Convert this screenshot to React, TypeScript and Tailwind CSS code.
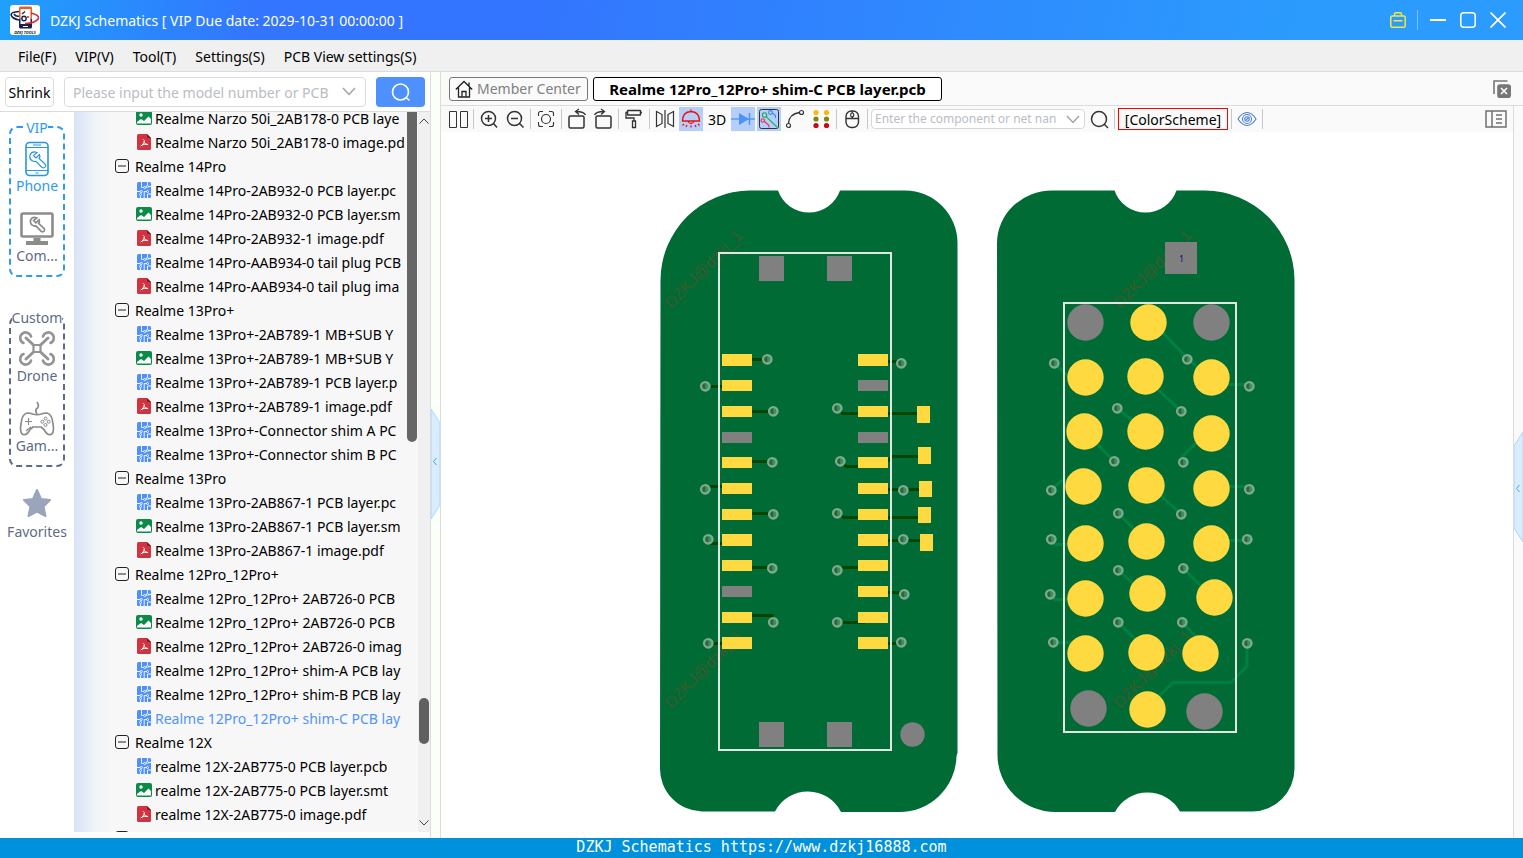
import type { ReactNode } from "react";

type FileKind = "pcb" | "smt" | "pdf";
type Row = { kind: FileKind | "group"; label: string; active?: boolean };

const rows: Row[] = [
  { kind: "smt", label: "Realme Narzo 50i_2AB178-0 PCB laye" },
  { kind: "pdf", label: "Realme Narzo 50i_2AB178-0 image.pd" },
  { kind: "group", label: "Realme 14Pro" },
  { kind: "pcb", label: "Realme 14Pro-2AB932-0 PCB layer.pc" },
  { kind: "smt", label: "Realme 14Pro-2AB932-0 PCB layer.sm" },
  { kind: "pdf", label: "Realme 14Pro-2AB932-1 image.pdf" },
  { kind: "pcb", label: "Realme 14Pro-AAB934-0 tail plug PCB" },
  { kind: "pdf", label: "Realme 14Pro-AAB934-0 tail plug ima" },
  { kind: "group", label: "Realme 13Pro+" },
  { kind: "pcb", label: "Realme 13Pro+-2AB789-1 MB+SUB Y" },
  { kind: "smt", label: "Realme 13Pro+-2AB789-1 MB+SUB Y" },
  { kind: "pcb", label: "Realme 13Pro+-2AB789-1 PCB layer.p" },
  { kind: "pdf", label: "Realme 13Pro+-2AB789-1 image.pdf" },
  { kind: "pcb", label: "Realme 13Pro+-Connector shim A PC" },
  { kind: "pcb", label: "Realme 13Pro+-Connector shim B PC" },
  { kind: "group", label: "Realme 13Pro" },
  { kind: "pcb", label: "Realme 13Pro-2AB867-1 PCB layer.pc" },
  { kind: "smt", label: "Realme 13Pro-2AB867-1 PCB layer.sm" },
  { kind: "pdf", label: "Realme 13Pro-2AB867-1 image.pdf" },
  { kind: "group", label: "Realme 12Pro_12Pro+" },
  { kind: "pcb", label: "Realme 12Pro_12Pro+ 2AB726-0 PCB" },
  { kind: "smt", label: "Realme 12Pro_12Pro+ 2AB726-0 PCB" },
  { kind: "pdf", label: "Realme 12Pro_12Pro+ 2AB726-0 imag" },
  { kind: "pcb", label: "Realme 12Pro_12Pro+ shim-A PCB lay" },
  { kind: "pcb", label: "Realme 12Pro_12Pro+ shim-B PCB lay" },
  { kind: "pcb", label: "Realme 12Pro_12Pro+ shim-C PCB lay", active: true },
  { kind: "group", label: "Realme 12X" },
  { kind: "pcb", label: "realme 12X-2AB775-0 PCB layer.pcb" },
  { kind: "smt", label: "realme 12X-2AB775-0 PCB layer.smt" },
  { kind: "pdf", label: "realme 12X-2AB775-0 image.pdf" },
  { kind: "group", label: "" },
];

function FileIcon({ kind }: { kind: FileKind }) {
  if (kind === "smt")
    return (
      <svg width="16" height="16" viewBox="0 0 16 16" className="shrink-0">
        <rect y="1" width="16" height="14" rx="2" fill="#0b8a4a" />
        <circle cx="5" cy="5" r="1.7" fill="#fff" />
        <path d="M1 12 L5 9 L8 11 L12.500 6.500 L15 9 V13.500 H1Z" fill="#fff" />
      </svg>
    );
  if (kind === "pdf")
    return (
      <svg width="16" height="16" viewBox="0 0 16 16" className="shrink-0">
        <path d="M2.500 0 H11 L15 4 V14.500 Q15 16 13.500 16 H2.500 Q1 16 1 14.500 V1.500 Q1 0 2.500 0Z" fill="#cf3440" />
        <path d="M11 0 L15 4 H11Z" fill="#8d1620" />
        <path d="M7.600 5.500 Q9 6 8 8.500 Q6.500 11.500 5 12 M8 8.500 Q9.500 10.500 11.500 10.600 M6 11 Q8 10 11 10.300" fill="none" stroke="#fff" strokeWidth="1" strokeLinecap="round" />
      </svg>
    );
  return (
    <svg width="16" height="16" viewBox="0 0 16 16" className="shrink-0">
      <rect x="1" width="14" height="16" rx="1.500" fill="#4d90fe" />
      <g fill="none" stroke="#fff" strokeWidth="0.900">
        <path d="M5.500 0 V5.500 H7.600 M1 9.500 H4 M8.200 16 V9.500 H10.500 M12.600 4.500 H15 M11.500 3.500 V0 M11.500 16 V12 H15 M4.500 16 V13.500" />
        <circle cx="8.700" cy="5.500" r="1.100" />
        <circle cx="5.200" cy="9.500" r="1.100" />
        <circle cx="11.500" cy="4.500" r="1.100" />
        <circle cx="11.500" cy="9.500" r="1" />
        <circle cx="4.500" cy="12.500" r="1" />
      </g>
    </svg>
  );
}

function Tree() {
  return (
    <ul className="-mt-1.5 min-w-0 flex-1 overflow-hidden pl-10">
      {rows.map((row, i) => (
        <li key={i}>
          {row.kind === "group" ? (
            <button aria-label="Toggle group" className="flex h-6 w-full items-center gap-1.5 whitespace-nowrap pl-px text-left">
              <svg width="14" height="14" viewBox="0 0 14 14" fill="none" stroke="#222" className="shrink-0">
                <rect x="0.500" y="0.500" width="13" height="13" rx="2.500" />
                <path d="M3 7 H11" />
              </svg>
              <span className="pt-0.5">{row.label}</span>
            </button>
          ) : (
            <button
              className={`flex h-6 w-full items-center gap-[3px] whitespace-nowrap pl-[22px] text-left ${row.active ? "text-[#5294fa]" : ""}`}
            >
              <FileIcon kind={row.kind} />
              <span className="min-w-0 pt-0.5">{row.label}</span>
            </button>
          )}
        </li>
      ))}
    </ul>
  );
}

const wrench = (
  <path d="M9.500 2.500 L6 6 L3.500 3.500 L7 0.500 Q2 -1.500 0 3 Q-1 8 4 9.500 L6 9.300 L12 15.500 Q14 16.500 15.200 15 Q16.200 13.500 15 12 L9 6.500 Q10.500 4.500 9.500 2.500Z" />
);

function PhoneIcon() {
  return (
    <svg width="36" height="36" viewBox="0 0 36 36" fill="none" stroke="#2a95e0">
      <rect x="7" y="1.500" width="22" height="33" rx="3.500" strokeWidth="1.600" />
      <path d="M7 6.500 H29 M7 29.500 H29" strokeWidth="1.200" />
      <path d="M14 4 H22 M16.500 32 H19.500" strokeWidth="1" />
      <g transform="translate(11 11)" strokeWidth="1.200">{wrench}</g>
    </svg>
  );
}

function ComputerIcon() {
  return (
    <svg width="36" height="36" viewBox="0 0 36 36" fill="none" stroke="#8c8c8c">
      <rect x="2.500" y="2.500" width="31" height="23" rx="1.500" strokeWidth="2.600" />
      <path d="M14.500 27 H21.500 V30 H29 V34 H7 V30 H14.500Z" fill="#8c8c8c" stroke="none" />
      <g transform="translate(11.500 6.500) scale(.9)" strokeWidth="1.900">{wrench}</g>
    </svg>
  );
}

function DroneIcon() {
  return (
    <svg width="36" height="36" viewBox="0 0 36 36" fill="none" stroke="#949494" strokeWidth="2.600" strokeLinecap="round">
      <path d="M14.500 14 H21.500 V21 H14.500Z" strokeWidth="2.200" />
      <path d="M7 7 L14.500 14 M29 7 L21.500 14 M7 28 L14.500 21 M29 28 L21.500 21" strokeWidth="3" />
      <path d="M4.500 12 A5.500 5.500 0 1 1 12 5.500 M31.500 12 A5.500 5.500 0 1 0 24 5.500 M4.500 23 A5.500 5.500 0 1 0 12 29.500 M31.500 23 A5.500 5.500 0 1 1 24 29.500" />
    </svg>
  );
}

function GamepadIcon() {
  return (
    <svg width="36" height="36" viewBox="0 0 36 36" fill="none" stroke="#8c8c8c" strokeWidth="1.700" strokeLinejoin="round">
      <path d="M8 12 Q12 12 13.500 13 Q18 14.500 22.500 13 Q24 12 28 12 Q33 13 34 23 Q35.500 32 32 33.500 Q28 34.500 25 28.500 L22 26 H14 L11 28.500 Q8 34.500 4 33.500 Q0.500 32 2 23 Q3 13 8 12Z" />
      <path d="M18 13 Q15.500 9 18.500 7 Q20.500 5 18 1" />
      <path d="M6 20.500 H13 M9.500 17 V24 M7 30 Q10 27 12 26" strokeWidth="1.200" />
      <g strokeWidth="1">
        <circle cx="26.500" cy="17.500" r="1.500" />
        <circle cx="26.500" cy="24" r="1.500" />
        <circle cx="23.300" cy="20.700" r="1.500" />
        <circle cx="29.700" cy="20.700" r="1.500" />
      </g>
    </svg>
  );
}

function StarIcon() {
  return (
    <svg width="36" height="36" viewBox="0 0 36 36" fill="#9aa5bb" stroke="#9aa5bb" strokeWidth="2" strokeLinejoin="round">
      <path d="M18 3 L22 12 L31 13 L24.500 19.500 L26.500 29 L18 24.500 L9.500 29 L11.500 19.500 L5 13 L14 12Z" />
    </svg>
  );
}

function NavItem({ icon, label }: { icon: ReactNode; label: string }) {
  return (
    <button className="flex h-14 w-full flex-col items-center">
      {icon}
      <span className="h-5 whitespace-nowrap leading-[18px]">{label}</span>
    </button>
  );
}

function SideNav() {
  return (
    <nav className="flex w-[74px] shrink-0 flex-col items-center bg-white pt-[5px] text-[#5d6b85]">
      <fieldset className="h-40 w-14 rounded-lg border-2 border-dashed border-[#2f9af5] text-[#2f9af5]">
        <legend className="mx-auto h-5 leading-[22px]">VIP</legend>
        <div className="flex flex-col gap-3.5 pt-1">
          <NavItem icon={<PhoneIcon />} label="Phone" />
          <div className="text-[#5d6b85]">
            <NavItem icon={<ComputerIcon />} label="Com..." />
          </div>
        </div>
      </fieldset>
      <fieldset className="mt-[30px] h-40 w-14 rounded-lg border-2 border-dashed border-[#5d6b85]">
        <legend className="mx-auto h-5 leading-[22px]">Custom</legend>
        <div className="flex flex-col gap-3.5 pt-1">
          <NavItem icon={<DroneIcon />} label="Drone" />
          <NavItem icon={<GamepadIcon />} label="Gam..." />
        </div>
      </fieldset>
      <div className="mt-5">
        <NavItem icon={<StarIcon />} label="Favorites" />
      </div>
    </nav>
  );
}

function Logo() {
  return (
    <svg width="30" height="30" viewBox="0 0 30 30" className="shrink-0">
      <rect width="30" height="30" rx="3" fill="#fff" />
      <rect x="9" y="1.500" width="13" height="12" rx="1.500" fill="#f15a24" />
      <rect x="9" y="13" width="13" height="10.500" rx="1.500" fill="#14224d" />
      <rect x="10.500" y="4" width="10" height="15" fill="#fff" />
      <path d="M9 6.500 Q0.500 7 1.200 10 Q2 13.500 9 15 M4 9 Q6 12 9 11" fill="none" stroke="#14224d" strokeWidth="1.600" />
      <path d="M21 8 Q29.500 10 28.500 13.500 Q25 18.500 15 18.500" fill="none" stroke="#e0242a" strokeWidth="1.600" />
      <circle cx="14" cy="13.500" r="2.200" fill="none" stroke="#14224d" strokeWidth="1.400" />
      <circle cx="18" cy="12" r="1" fill="#e0242a" />
      <path d="M12 9 L15 6.500" stroke="#14224d" strokeWidth="1.300" />
      <path d="M13 21.500 H18" stroke="#fff" strokeWidth="1" />
      <text x="15" y="28.500" textAnchor="middle" fontSize="4" fontWeight="700" fontStyle="italic" fill="#14224d">DZKJ TOOLS</text>
    </svg>
  );
}

function Chevron() {
  return (
    <svg width="14" height="9" viewBox="0 0 14 9" fill="none" stroke="#a0a4ab" strokeWidth="1.500">
      <path d="M1 1 L7 7.500 L13 1" />
    </svg>
  );
}

function Sep() {
  return <span className="mx-px h-5 w-px bg-[#c8c8c8]" />;
}

function Tool({ label, on, children }: { label: string; on?: boolean; children: ReactNode }) {
  return (
    <button aria-label={label} className={`flex h-6 w-6 items-center justify-center ${on ? "bg-[#b5cffb]" : ""}`}>
      {children}
    </button>
  );
}

function Glyph({ children }: { children: ReactNode }) {
  return (
    <svg width="24" height="24" viewBox="0 0 24 24" fill="none" stroke="#333" strokeWidth="1.500" className="shrink-0">
      {children}
    </svg>
  );
}

function Toolbar() {
  return (
    <div className="flex h-[26px] items-center gap-0.5 bg-[#fafafa] pl-[5px]">
      <Tool label="Split view">
        <Glyph><path d="M3.500 4.500 H10.500 V20.500 H3.500Z M14.500 4.500 H21.500 V20.500 H14.500Z" strokeWidth="1" /></Glyph>
      </Tool>
      <Sep />
      <Tool label="Zoom in">
        <Glyph><circle cx="11.500" cy="11.500" r="7" /><path d="M16.500 16.500 L20 20.500 M8 11.500 H15 M11.500 8 V15" /></Glyph>
      </Tool>
      <Tool label="Zoom out">
        <Glyph><circle cx="11.500" cy="11.500" r="7" /><path d="M16.500 16.500 L20.500 20.500 M8 11.500 H15" /></Glyph>
      </Tool>
      <Sep />
      <Tool label="Fit">
        <Glyph><circle cx="12" cy="12" r="4.500" strokeWidth="1.200" /><path d="M4.500 9 V6.500 Q4.500 4.500 6.500 4.500 H9 M15 4.500 H17.500 Q19.500 4.500 19.500 6.500 V9 M19.500 15 V17.500 Q19.500 19.500 17.500 19.500 H15 M9 19.500 H6.500 Q4.500 19.500 4.500 17.500 V15" strokeWidth="1.100" /></Glyph>
      </Tool>
      <Sep />
      <Tool label="Rotate left">
        <Glyph><rect x="4" y="9" width="15" height="12" rx="1.500" /><path d="M20.500 8 Q19 4.500 11 4.500 M14 2 L10.500 4.500 L14 7.500" strokeWidth="1.300" /></Glyph>
      </Tool>
      <Tool label="Rotate right">
        <Glyph><rect x="5" y="9" width="15" height="12" rx="1.500" /><path d="M3.500 8 Q5 4.500 13 4.500 M10 2 L13.500 4.500 L10 7.500" strokeWidth="1.300" /></Glyph>
      </Tool>
      <Sep />
      <Tool label="Paint">
        <Glyph><rect x="5.500" y="3.500" width="13" height="4.500" rx="0.500" /><path d="M18.500 5.500 H20 M5.500 5.500 H4 V11 H12 V14 M10.500 14 H13.500 V20.500 H10.500Z" strokeWidth="1.300" /></Glyph>
      </Tool>
      <Sep />
      <Tool label="Mirror">
        <Glyph><path d="M3.500 4.500 L9 7.500 V16.500 L3.500 19.500Z M20.500 4.500 L15 7.500 V16.500 L20.500 19.500Z M12 3 V21" strokeWidth="1.200" /></Glyph>
      </Tool>
      <Tool label="Highlight" on>
        <Glyph><g stroke="#f01010" strokeWidth="1.300"><path d="M3.500 14 Q3.500 5 12 4.500 Q20.500 5 20.500 14Z M12 4.500 V2.500 M8.500 14 Q12 19 15.500 14 M5 17 L3.500 18.500 M19 17 L20.500 18.500 M8 18 L7 20 M12 18.500 V20.500 M16 18 L17 20" /></g></Glyph>
      </Tool>
      <Tool label="3D view"><span className="pt-0.5">3D</span></Tool>
      <Tool label="Diode" on>
        <Glyph><path d="M0 12 H24" stroke="#4d90fe" strokeWidth="1.300" /><path d="M8 6 V18 L18 12Z" fill="#4d90fe" stroke="none" /><path d="M18.500 6 V18" stroke="#4d90fe" strokeWidth="1.500" /></Glyph>
      </Tool>
      <Tool label="Nets" on>
        <Glyph>
          <rect x="2.500" y="2.500" width="19" height="19" rx="2" strokeWidth="1" />
          <g strokeWidth="1.100">
            <path d="M9 9.500 L21 21" stroke="#22b35a" /><circle cx="7.500" cy="8" r="2.200" stroke="#22a35a" />
            <path d="M15.500 6 L18.500 8.500 V11" stroke="#3c83f5" /><circle cx="13.500" cy="5.500" r="1.900" stroke="#3c83f5" />
            <path d="M7.500 14.500 L12 18.500 V20.500" stroke="#e8304a" /><circle cx="5.800" cy="13.500" r="1.700" stroke="#e8304a" />
          </g>
        </Glyph>
      </Tool>
      <Tool label="Curve">
        <Glyph><circle cx="5.500" cy="18.500" r="2" strokeWidth="1.200" /><circle cx="18.500" cy="5.500" r="2" strokeWidth="1.200" /><path d="M5.500 16.500 Q6 7 16.500 5.500" strokeWidth="1.300" /></Glyph>
      </Tool>
      <Tool label="Pins">
        <Glyph>
          <g stroke="none">
            <g fill="#fbb615"><circle cx="7" cy="5.500" r="2.600" /><circle cx="17.500" cy="5.500" r="2.600" /></g>
            <g fill="#7c8a12"><circle cx="7" cy="12" r="2.600" /><circle cx="17.500" cy="12" r="2.600" /></g>
            <g fill="#c80a14"><circle cx="7" cy="18.500" r="2.600" /><circle cx="17.500" cy="18.500" r="2.600" /></g>
          </g>
        </Glyph>
      </Tool>
      <Sep />
      <Tool label="Mouse">
        <Glyph><rect x="6" y="4" width="12.500" height="16.500" rx="5.500" strokeWidth="1.400" /><path d="M6 11.500 H18.500 M12.200 4 V6 M12.200 9 V11.500" strokeWidth="1.300" /><rect x="10.700" y="6" width="3" height="4" rx="1.500" strokeWidth="1.200" /></Glyph>
      </Tool>
      <Sep />
      <div className="flex h-5 w-[214px] items-center rounded-sm border border-[#d5d8dd] bg-white pl-[3px] pr-1">
        <input aria-label="Component or net name" placeholder="Enter the component or net nan" className="mr-1 min-w-0 flex-1 text-xs outline-none placeholder:text-[#b9bdc4]" />
        <button aria-label="Open net list"><Chevron /></button>
      </div>
      <Tool label="Search board">
        <Glyph><circle cx="12" cy="12" r="7.500" /><path d="M17 17 L21 21" /></Glyph>
      </Tool>
      <Sep />
      <button className="flex h-[22px] w-[110px] items-center justify-center border border-[#f00] pt-0.5">[ColorScheme]</button>
      <Sep />
      <Tool label="Visibility">
        <Glyph><g stroke="#4b7fdb" strokeWidth="1.100"><path d="M3 12 Q7 5.500 12 5.500 Q17 5.500 21 12 Q17 18.500 12 18.500 Q7 18.500 3 12Z" /><circle cx="12" cy="12" r="4.500" /><circle cx="12" cy="12" r="2.200" /><path d="M11 13 L14 10" /></g></Glyph>
      </Tool>
      <Sep />
      <button aria-label="Side panel" className="ml-auto mr-1.5">
        <svg width="22" height="18" viewBox="0 0 22 18" fill="none" stroke="#707070" strokeWidth="1.500">
          <path d="M1 1 H21 V17 H1Z M7 1 V17 M11 5 H17 M11 9 H17 M11 13 H17" />
        </svg>
      </button>
    </div>
  );
}

type Pt = [number, number];

const padTops = [354, 380, 406, 432, 457, 483, 509, 534, 560, 586, 612, 637];
const sidePads: Pt[] = [[917, 406], [918, 447], [919, 481], [918, 507], [920, 534]];
const topVias: Pt[] = [
  [767, 359], [705, 386], [773, 411], [772, 462], [705, 489], [773, 514], [708, 539], [772, 568], [773, 622], [708, 643],
  [901, 363], [837, 408], [840, 461], [903, 490], [837, 513], [903, 539], [837, 570], [904, 594], [837, 622], [901, 642],
];
const bottomVias: Pt[] = [
  [1054, 363], [1187, 359], [1249, 386], [1117, 408], [1181, 411], [1114, 461], [1183, 462], [1051, 490], [1249, 489], [1118, 513],
  [1181, 514], [1051, 539], [1247, 539], [1118, 570], [1183, 568], [1050, 594], [1118, 622], [1182, 622], [1053, 642], [1247, 643],
];
const goldDots: Pt[] = [
  [1148.5, 322.5], [1085.5, 377.5], [1145.5, 376.5], [1211.5, 377.5], [1084.5, 431.5], [1145.5, 431.5], [1211.5, 433.5],
  [1083.5, 486.5], [1146.5, 485.5], [1211.5, 488.5], [1085.5, 543.5], [1146.5, 541.5], [1211.5, 543.5], [1085.5, 598.5],
  [1147.5, 593.5], [1214.5, 597.5], [1085.5, 653.5], [1146.5, 652.5], [1200.5, 653.5], [1147.5, 709.5],
];
const greyDots: Pt[] = [[1085.5, 322.5], [1211.5, 322.5], [1088.5, 708.5], [1204.5, 711.5]];

function Via({ at: [x, y] }: { at: Pt }) {
  return (
    <g>
      <circle cx={x + 0.3} cy={y + 0.3} r="4.200" fill="#339462" stroke="#7fa992" strokeWidth="2.400" />
      <path d={`M${x + 0.3} ${y - 2.7} A3 3 0 0 0 ${x + 0.3} ${y + 3.3}Z`} fill="#33662f" />
    </g>
  );
}

function Watermark({ x, y }: { x: number; y: number }) {
  return (
    <text transform={`translate(${x} ${y}) rotate(-45)`} fontSize="16" fill="#a03a20" fillOpacity="0.380">
      DZKJ@dzkj_1
    </text>
  );
}

function Boards() {
  return (
    <svg width="640" height="640" viewBox="657 180 640 640" className="shrink-0" role="img" aria-label="PCB layers">
      <g fill="#006b35">
        <path d="M660.500 280 A90 90 0 0 1 750 190.500 H778 A32.800 32.800 0 0 0 840 190.500 H905 A52.500 52.500 0 0 1 957.500 243 V753 L956.500 756 A57 57 0 0 1 898 812 H841 A37 37 0 0 0 775 811.500 H702 A43 43 0 0 1 660 767Z" />
        <path d="M997 243 A55 53 0 0 1 1052 190.500 H1114.500 A32.800 32.800 0 0 0 1176.500 190.500 H1205 A90 90 0 0 1 1294.500 280 V769 A43 43 0 0 1 1252 811.500 H1180 A37 37 0 0 0 1115 812 H1056 A58 57 0 0 1 997.500 755Z" />
      </g>
      <g fontFamily="Liberation Sans, sans-serif">
        <Watermark x={671} y={309} />
        <Watermark x={671} y={709} />
        <Watermark x={1120} y={309} />
        <Watermark x={1120} y={709} />
      </g>
      <path
        fill="none"
        stroke="#004600"
        strokeWidth="3"
        d="M752 359.500 H767 M705 386.500 H722 M752 411.500 H773 M752 461.500 H772 M705 489 L710 486.500 H722 M752 513.500 H773 M708 540 L710 543.500 H722 M752 567.500 H772 M752 615.500 H772 L773 622 M708 643.500 H722 M888 361.500 H897 L901 363 M837 408 L843 413.500 H917 M840 461 L846 466.500 H858 M888 461.500 L892 456.500 H918 M888 489.500 H919 M837 513 L844 517.500 H918 M888 540.500 H920 M837 570 L843 567.500 H858 M888 592.500 H904 M837 622.500 H865 M888 643.500 H897 L901 642"
      />
      <path
        fill="none"
        stroke="#00803f"
        strokeWidth="3"
        d="M1163 333 L1187 358 L1198 368 M1054 363 L1068 376 M1225 384.500 H1249 M1156 388 L1181 411 M1117 408 L1134 422 M1096 443 L1114 461 M1197 442 L1182 457 L1183 462 M1051 490 L1061 481 H1068 M1225 486.500 H1249 M1160 495 L1181 514 M1118 513 L1135 530 M1051 541 L1055 544.500 H1070 M1225 540.500 H1247 M1118 570 L1135 585 M1183 568 L1203 588 M1050 594 L1055 599.500 H1070 M1118 622 L1136 640 M1182 622 L1197 638 M1053 642.500 H1072 M1247 643 V666 L1231 682.500 H1173 L1158 697"
      />
      {topVias.map((p) => <Via key={`${p}`} at={p} />)}
      {bottomVias.map((p) => <Via key={`${p}`} at={p} />)}
      <path d="M719 253 H891 V750 H719Z M1064 303 H1236 V732 H1064Z" fill="none" stroke="#e0e6e2" strokeWidth="2" />
      {padTops.map((y, i) => (
        <g key={y}>
          <rect x="722" y={y} width="30" height={i % 11 && i !== 7 ? 11 : 12} fill={i === 3 || i === 9 ? "#808080" : "#ffd940"} />
          <rect x="858" y={y} width="30" height={i % 11 && i !== 7 ? 11 : 12} fill={i === 1 || i === 3 ? "#808080" : "#ffd940"} />
        </g>
      ))}
      {sidePads.map(([x, y], i) => (
        <rect key={y} x={x} y={y} width="13" height={i === 2 || i === 3 ? 16 : 17} fill="#ffd940" />
      ))}
      <g fill="#808080">
        <path d="M759 256 h25 v25 h-25Z M827 256 h25 v25 h-25Z M759 722 h25 v25 h-25Z M827 722 h25 v25 h-25Z M1165 242 h32 v32 h-32Z" />
        <circle cx="912.500" cy="734.500" r="12.200" />
        {greyDots.map(([x, y]) => <circle key={`${x}-${y}`} cx={x} cy={y} r="18.200" />)}
      </g>
      <g fill="#ffd940">
        {goldDots.map(([x, y]) => <circle key={`${x}-${y}`} cx={x} cy={y} r="18.200" />)}
      </g>
      <text x="1181.500" y="262" fontSize="8" textAnchor="middle" fill="#000080">1</text>
    </svg>
  );
}

function Handle() {
  return (
    <button aria-label="Collapse panel" className="block h-[110px] w-full">
      <svg width="100%" height="110" viewBox="0 0 9 110" preserveAspectRatio="none" fill="none">
        <path d="M0 0 L9 14 V96 L0 110Z" fill="#d9edff" stroke="#a9d5fb" />
        <path d="M5.500 49 L2.500 52.500 L5.500 56" stroke="#4aa0ea" />
      </svg>
    </button>
  );
}

function RightHandle() {
  return (
    <button aria-label="Expand panel" className="block h-[110px] w-full">
      <svg width="100%" height="110" viewBox="0 0 9 110" preserveAspectRatio="none" fill="none">
        <path d="M9 0 L0 14 V96 L9 110Z" fill="#d9edff" stroke="#a9d5fb" />
        <path d="M5.500 53 L2.500 56.500 L5.500 60" stroke="#4aa0ea" />
      </svg>
    </button>
  );
}

export default function App() {
  return (
    <div className="flex h-screen flex-col overflow-hidden bg-white font-['Noto_Sans','Noto_Sans_CJK_SC',sans-serif] text-sm text-black">
      <header className="flex h-10 shrink-0 items-center bg-[linear-gradient(100deg,#1fa0fc_0%,#3375fe_17%,#3375fe_35%,#2b9bfd_85%)] px-2.5 text-white">
        <Logo />
        <h1 className="ml-2.5 pt-0.5">DZKJ Schematics [ VIP Due date: 2029-10-31 00:00:00 ]</h1>
        <div className="ml-auto flex items-center gap-2.5 pr-[7px]">
          <button aria-label="Toolbox" className="mr-px">
            <svg width="16" height="16" viewBox="0 0 16 16" fill="none" stroke="#f5e642" strokeWidth="1.500">
              <rect x="0.800" y="4" width="14.400" height="11.200" rx="1.500" />
              <path d="M4.500 4 V2.300 Q4.500 0.800 6 0.800 H10 Q11.500 0.800 11.500 2.300 V4 M3.500 8.800 H12.500" />
            </svg>
          </button>
          <span className="h-5 w-px bg-white/40" />
          <button aria-label="Minimize" className="ml-0.5">
            <svg width="16" height="16" viewBox="0 0 16 16" stroke="#fff" strokeWidth="2"><path d="M0 8 H16" /></svg>
          </button>
          <button aria-label="Maximize" className="ml-1">
            <svg width="16" height="16" viewBox="0 0 16 16" fill="none" stroke="#fff" strokeWidth="1.500"><rect x="0.800" y="0.800" width="14.400" height="14.400" rx="3" /></svg>
          </button>
          <button aria-label="Close" className="ml-1">
            <svg width="16" height="16" viewBox="0 0 16 16" stroke="#fff" strokeWidth="1.700"><path d="M0.500 0.500 L15.500 15.500 M15.500 0.500 L0.500 15.500" /></svg>
          </button>
        </div>
      </header>

      <div className="flex h-8 shrink-0 items-center gap-[19px] border-b border-[#dcdcdc] bg-[#f0f0f0] px-[18px] pt-0.5">
        <button>File(F)</button>
        <button>VIP(V)</button>
        <button>Tool(T)</button>
        <button>Settings(S)</button>
        <button>PCB View settings(S)</button>
      </div>

      <div className="flex min-h-0 flex-1">
        <aside className="flex w-[431px] shrink-0 flex-col border-r border-[#dcdcdc] bg-white pb-1.5">
          <div className="flex h-10 shrink-0 items-center gap-2.5 border-b border-[#dcdcdc] px-[5px]">
            <button className="h-[30px] w-[49px] rounded border border-[#dcdcdc] pt-0.5 text-center">Shrink</button>
            <div className="flex h-[30px] flex-1 items-center rounded border border-[#dcdcdc] pl-2 pr-[9px]">
              <input aria-label="Model number" placeholder="Please input the model number or PCB" className="mr-1.5 min-w-0 flex-1 pt-0.5 outline-none placeholder:text-[#b9bdc4]" />
              <button aria-label="Open model list"><Chevron /></button>
            </div>
            <button aria-label="Search" className="flex h-[30px] w-[49px] items-center justify-center rounded bg-[#4d90fe]">
              <svg width="20" height="20" viewBox="0 0 20 20" fill="none" stroke="#fff" strokeWidth="1.600">
                <circle cx="9.500" cy="10" r="8" />
                <path d="M15 15.500 L18.500 18.500" />
              </svg>
            </button>
          </div>
          <div className="flex min-h-0 flex-1">
            <SideNav />
            <div className="flex min-w-0 flex-1 overflow-hidden bg-[linear-gradient(90deg,#d7e3f5_0px,#f0f3f8_20px,#f7f7f7_36px)]">
              <Tree />
              <div className="ml-px h-[330px] w-2.5 rounded-b-md bg-[#666]" />
              <div className="ml-px flex w-3 flex-col items-center bg-[#f0f0f0] py-1.5">
                <svg width="10" height="6" viewBox="0 0 10 6" fill="none" stroke="#444"><path d="M0.500 5.500 L5 1 L9.500 5.500" /></svg>
                <div className="mt-[574px] h-[46px] w-2.5 rounded-full bg-[#606060]" />
                <svg width="10" height="6" viewBox="0 0 10 6" fill="none" stroke="#444" className="mt-auto"><path d="M0.500 0.500 L5 5 L9.500 0.500" /></svg>
              </div>
            </div>
          </div>
        </aside>

        <div className="flex w-2.5 shrink-0 flex-col justify-center border-r border-[#dcdcdc] bg-[#fafff8] pt-[18px]">
          <Handle />
        </div>

        <main className="flex min-w-0 flex-1 flex-col">
          <div className="flex h-[34px] shrink-0 items-center gap-[5px] border-b border-[#dcdcdc] bg-[#fafafa] pl-2 pr-3">
            <button className="flex h-6 w-[139px] items-center gap-1 rounded-[3px] border border-[#777] pl-[5px] text-[#808080]">
              <svg width="18" height="18" viewBox="0 0 18 18" fill="none" stroke="#222" strokeWidth="1.300">
                <path d="M0.800 9.500 L9 1.500 L17.200 9.500 M3.500 7.500 V17 H14.500 V7.500 M7 17 V11.500 H11 V17 M14 6 V2.500" />
              </svg>
              <span className="whitespace-nowrap">Member Center</span>
            </button>
            <button className="h-6 w-[349px] whitespace-nowrap rounded-[3px] border border-black bg-white text-center text-[15px] font-bold leading-5">
              Realme 12Pro_12Pro+ shim-C PCB layer.pcb
            </button>
            <button aria-label="Close all" className="ml-auto">
              <svg width="18" height="18" viewBox="0 0 18 18" fill="none" stroke="#777" strokeWidth="1.600">
                <path d="M1 14 V1 H14.500" />
                <rect x="5" y="5" width="12.200" height="12.200" rx="2" fill="#777" />
                <path d="M8 8 L14 14 M14 8 L8 14" stroke="#fff" />
              </svg>
            </button>
          </div>
          <div className="flex min-h-0 flex-1">
            <div className="flex min-w-0 flex-1 flex-col">
              <Toolbar />
              <div className="flex min-h-0 flex-1 justify-center overflow-hidden bg-white pt-12">
                <Boards />
              </div>
            </div>
            <div className="flex w-2.5 shrink-0 flex-col justify-center border-l border-[#dcdcdc] bg-[#fafafa] pt-[30px]">
              <RightHandle />
            </div>
          </div>
        </main>
      </div>

      <footer className="flex h-5 shrink-0 items-center justify-center bg-[#0091dc] font-['DejaVu_Sans_Mono',monospace] text-[15px] text-white">
        DZKJ Schematics https://www.dzkj16888.com
      </footer>
    </div>
  );
}
